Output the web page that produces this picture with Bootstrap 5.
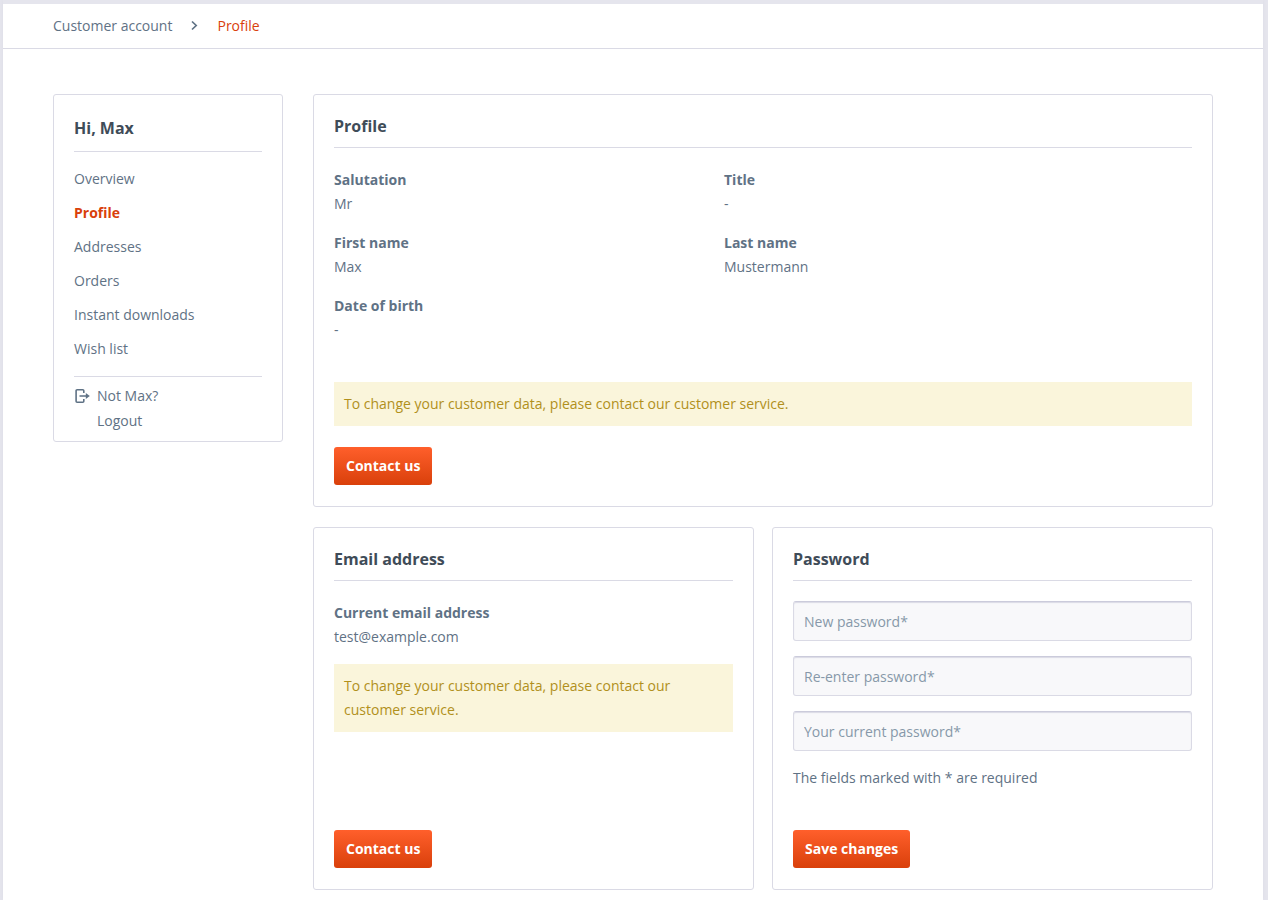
<!DOCTYPE html>
<html lang="en">
<head>
<meta charset="utf-8">
<meta name="viewport" content="width=device-width, initial-scale=1">
<title>Profile | Customer account</title>
<link href="https://cdn.jsdelivr.net/npm/bootstrap@5.3.0/dist/css/bootstrap.min.css" rel="stylesheet">
<style>
  :root { --line: #dadae5; --ink: #5f7285; --strong: #3f4c58; --accent: #d9400b; }
  body { background: #e5e5ed; color: var(--ink); font: 14px/24px "Open Sans", "Liberation Sans", sans-serif; }
  a { color: inherit; text-decoration: none; }
  a:hover { color: var(--accent); }
  .page { margin: 0 5px 0 3px; border-top: 4px solid #e5e5ed; min-height: 100vh; box-shadow: 0 0 4px #dcdce6; background: #fff; }
  .crumbs { border-bottom: 1px solid var(--line); padding: 10px 50px; }
  .crumbs [aria-current] { color: var(--accent); }
  .shop-content { display: grid; grid-template-columns: 230px minmax(0, 1fr); gap: 30px; align-items: start; padding: 45px 50px 9px; }
  .panel { border: 1px solid var(--line); border-radius: 3px; padding: 20px 20px 21px; }
  .panel-title { color: var(--strong); font-size: 16px; font-weight: 700; line-height: 22px; border-bottom: 1px solid var(--line); padding-bottom: 10px; margin-bottom: 20px; }
  .side { padding-bottom: 8px; }
  .side .panel-title { line-height: 26px; margin-bottom: 10px; }
  .side ul { border-bottom: 1px solid var(--line); padding-bottom: 10px; margin-bottom: 6px; }
  .side li a { display: block; padding: 5px 0; }
  .side .active { color: var(--accent); font-weight: 700; }
  .logout { line-height: 25px; gap: 7px; }
  .logout svg { margin-top: 5px; }
  .data { display: grid; grid-template-columns: 5fr 6fr; row-gap: 15px; margin-bottom: 40px; }
  dl { margin: 0 0 15px; }
  dd { margin: 0; }
  dt { font-weight: 700; }
  .notice { background: #faf5db; color: #b1901c; padding: 10px; margin-bottom: 21px; }
  .pair { display: grid; grid-template-columns: repeat(auto-fit, minmax(300px, 1fr)); gap: 18px; margin-top: 20px; }
  .action { color: #fff; font-size: 14px; font-weight: 700; line-height: 36px; padding: 1px 12px; border: 0; border-radius: 3px; background: linear-gradient(#ff5f2b, #d9400b); align-self: flex-start; }
  .action:hover { color: #fff; background: #d9400b; }
  .field { height: 40px; font-size: 14px; line-height: 20px; padding: 9px 10px; margin-bottom: 15px; color: var(--ink); background: #f8f8fa; border: 1px solid var(--line); border-top-color: #cbcbdb; border-radius: 3px; box-shadow: inset 0 1px 1px #dadae5; }
  .field::placeholder { color: #8798a9; opacity: 1; }
  .required-note { margin-bottom: 40px; }
</style>
</head>
<body>
<div class="page">
  <nav class="crumbs" aria-label="Breadcrumb">
    <ol class="list-unstyled d-flex align-items-center mb-0">
      <li><a href="#">Customer account</a></li>
      <li class="d-flex px-3" aria-hidden="true"><svg width="13" height="12" viewBox="0 0 13 12" fill="none" stroke="#5f7285" stroke-width="1.7"><path d="M4 1.5 8.2 5.5 4 9.5"/></svg></li>
      <li><a href="#" aria-current="page">Profile</a></li>
    </ol>
  </nav>
  <div class="shop-content">
    <aside class="panel side">
      <h2 class="panel-title">Hi, Max</h2>
      <ul class="list-unstyled">
        <li><a href="#">Overview</a></li>
        <li><a href="#" class="active">Profile</a></li>
        <li><a href="#">Addresses</a></li>
        <li><a href="#">Orders</a></li>
        <li><a href="#">Instant downloads</a></li>
        <li><a href="#">Wish list</a></li>
      </ul>
      <a href="#" class="logout d-flex align-items-start">
        <svg width="16" height="16" viewBox="0 0 16 16" fill="none" stroke="#5f7285" stroke-width="1.6"><path d="M9.8 5V2.7a1 1 0 0 0-1-1H3.1a1 1 0 0 0-1 1v10.6a1 1 0 0 0 1 1h5.7a1 1 0 0 0 1-1V11M5.5 8h8"/><path d="M11.8 5 15.8 8l-4 3z" fill="#5f7285" stroke="none"/></svg>
        <span>Not Max?<br>Logout</span>
      </a>
    </aside>
    <main>
      <section class="panel">
        <h1 class="panel-title">Profile</h1>
        <dl class="data">
          <div><dt>Salutation</dt><dd>Mr</dd></div>
          <div><dt>Title</dt><dd>-</dd></div>
          <div><dt>First name</dt><dd>Max</dd></div>
          <div><dt>Last name</dt><dd>Mustermann</dd></div>
          <div><dt>Date of birth</dt><dd>-</dd></div>
        </dl>
        <div class="notice" role="note">To change your customer data, please contact our customer service.</div>
        <button type="button" class="btn action">Contact us</button>
      </section>
      <div class="pair">
        <section class="panel d-flex flex-column">
          <h2 class="panel-title">Email address</h2>
          <dl><dt>Current email address</dt><dd>test@example.com</dd></dl>
          <div class="notice" role="note">To change your customer data, please contact our customer service.</div>
          <button type="button" class="btn action mt-auto">Contact us</button>
        </section>
        <form class="panel d-flex flex-column">
          <h2 class="panel-title">Password</h2>
          <input class="form-control field" type="password" placeholder="New password*" aria-label="New password">
          <input class="form-control field" type="password" placeholder="Re-enter password*" aria-label="Re-enter password">
          <input class="form-control field" type="password" placeholder="Your current password*" aria-label="Your current password">
          <p class="required-note">The fields marked with * are required</p>
          <button type="button" class="btn action">Save changes</button>
        </form>
      </div>
    </main>
  </div>
</div>
<script src="https://cdn.jsdelivr.net/npm/bootstrap@5.3.0/dist/js/bootstrap.bundle.min.js"></script>
</body>
</html>
